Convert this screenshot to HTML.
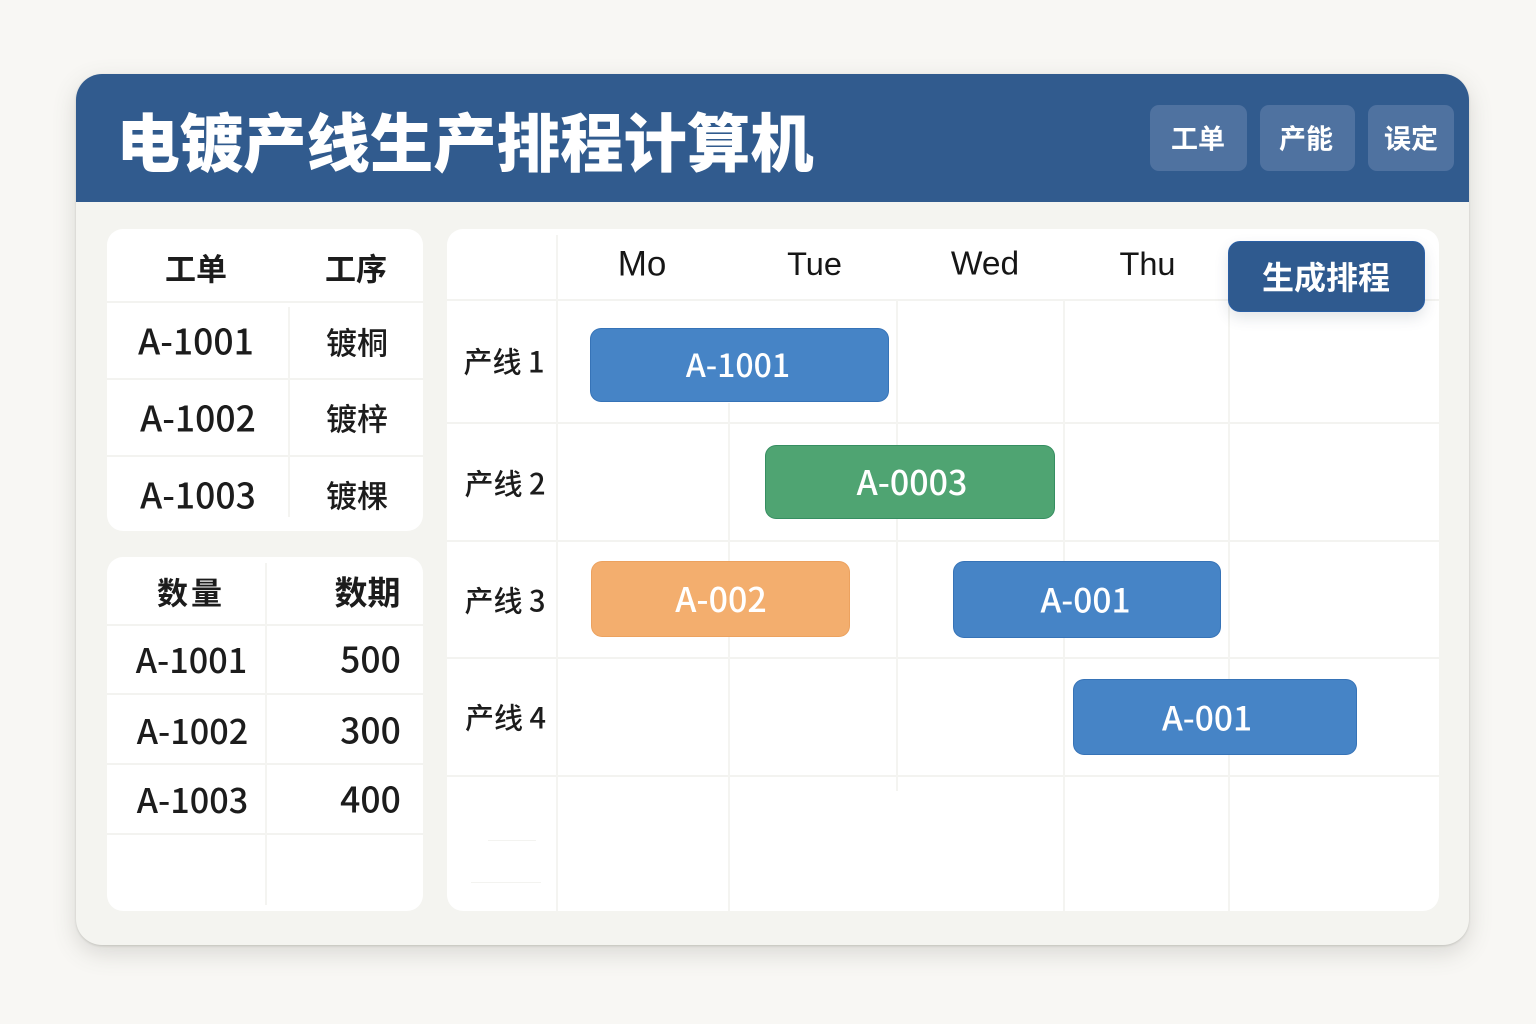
<!DOCTYPE html>
<html lang="zh">
<head>
<meta charset="utf-8">
<title>电镀产线生产排程计算机</title>
<style>
html,body{margin:0;padding:0;width:1536px;height:1024px;overflow:hidden;background:#f8f7f4}
body{position:relative;font-family:"Liberation Sans","Noto Sans CJK SC",sans-serif;color:#1c1c1c}
div{position:absolute;box-sizing:border-box}
.card{left:76px;top:74px;width:1393px;height:871px;border-radius:26px;background:#f4f4f0;box-shadow:0 8px 24px rgba(90,90,80,.2),0 1px 2px rgba(90,90,80,.22)}
.head{left:76px;top:74px;width:1393px;height:128px;border-radius:26px 26px 0 0;background:#315b8e}
.panel{background:#fff;border-radius:16px}
.h{height:2px;background:#f3f3f0}
.v{width:2px;background:#f4f4f1}
.t{white-space:nowrap;transform:translate(-50%,-50%);line-height:1;font-family:"Noto Sans CJK SC",sans-serif}
.nav{background:#4f72a0;border-radius:9px;top:105px;height:66px}
.nt{color:#fff;font-weight:700;font-size:27px}
.day{font-family:"Liberation Sans",sans-serif;font-size:32.5px;color:#161616}
.c{font-size:35.5px;font-weight:500}
.c2{font-size:34.2px;font-weight:500}
.n{font-size:35.5px;font-weight:500}
.th{font-size:31px;font-weight:700}
.p{font-size:31px;font-weight:500}
.line{font-size:29px;font-weight:500}
.bar{border-radius:11px;border:1px solid rgba(30,90,160,.4);background:#4684c6}
.bt{color:#fff;font-size:34px;font-weight:500}
</style>
</head>
<body>
<div class="card"></div>
<div class="head"></div>
<div class="t" style="left:465px;top:140px;font-size:63.4px;font-weight:900;color:#fff">电镀产线生产排程计算机</div>

<div class="nav" style="left:1150px;width:97px"></div>
<div class="nav" style="left:1260px;width:95px"></div>
<div class="nav" style="left:1368px;width:86px"></div>
<div class="t nt" style="left:1198px;top:137px">工单</div>
<div class="t nt" style="left:1306px;top:137px">产能</div>
<div class="t nt" style="left:1411px;top:137px">误定</div>

<!-- left table 1 -->
<div class="panel" style="left:107px;top:229px;width:316px;height:302px"></div>
<div class="h" style="left:107px;top:301px;width:316px"></div>
<div class="h" style="left:107px;top:378px;width:316px"></div>
<div class="h" style="left:107px;top:455px;width:316px"></div>
<div class="v" style="left:288px;top:307px;height:210px"></div>
<div class="t th" style="left:196px;top:267px">工单</div>
<div class="t th" style="left:356px;top:267px">工序</div>
<div class="t c" style="left:196px;top:340px">A-1001</div>
<div class="t c" style="left:198px;top:417px">A-1002</div>
<div class="t c" style="left:198px;top:494px">A-1003</div>
<div class="t p" style="left:357px;top:341px">镀桐</div>
<div class="t p" style="left:357px;top:417px">镀梓</div>
<div class="t p" style="left:357px;top:494px">镀棵</div>

<!-- left table 2 -->
<div class="panel" style="left:107px;top:557px;width:316px;height:354px"></div>
<div class="h" style="left:107px;top:624px;width:316px"></div>
<div class="h" style="left:107px;top:693px;width:316px"></div>
<div class="h" style="left:107px;top:763px;width:316px"></div>
<div class="h" style="left:107px;top:833px;width:316px"></div>
<div class="v" style="left:265px;top:563px;height:342px"></div>
<div class="t th" style="left:191px;top:591px;letter-spacing:3px">数量</div>
<div class="t th" style="left:367.5px;top:591px;font-size:33px">数期</div>
<div class="t c2" style="left:191.5px;top:658px">A-1001</div>
<div class="t c2" style="left:192.5px;top:729px">A-1002</div>
<div class="t c2" style="left:192.5px;top:798px">A-1003</div>
<div class="t n" style="left:370.5px;top:658px">500</div>
<div class="t n" style="left:370.5px;top:729px">300</div>
<div class="t n" style="left:370.5px;top:798px">400</div>

<!-- gantt panel -->
<div class="panel" style="left:447px;top:229px;width:992px;height:682px"></div>
<div class="h" style="left:447px;top:299px;width:992px"></div>
<div class="h" style="left:447px;top:422px;width:992px"></div>
<div class="h" style="left:447px;top:540px;width:992px"></div>
<div class="h" style="left:447px;top:657px;width:992px"></div>
<div class="h" style="left:447px;top:775px;width:992px"></div>
<div class="v" style="left:556px;top:235px;height:676px"></div>
<div class="v" style="left:728px;top:403px;height:508px"></div>
<div class="v" style="left:896px;top:300px;height:491px"></div>
<div class="v" style="left:1063px;top:300px;height:611px"></div>
<div class="v" style="left:1228px;top:300px;height:611px"></div>
<div class="h" style="left:488px;top:840px;width:48px;height:1px"></div>
<div class="h" style="left:471px;top:882px;width:70px;height:1px"></div>

<div class="t day" style="left:642px;top:264px;font-size:35px">Mo</div>
<div class="t day" style="left:814.5px;top:264px">Tue</div>
<div class="t day" style="left:985px;top:264px;font-size:33.5px">Wed</div>
<div class="t day" style="left:1147.5px;top:264px">Thu</div>

<div class="t line" style="left:504px;top:361px">产线 1</div>
<div class="t line" style="left:505px;top:483px">产线 2</div>
<div class="t line" style="left:505px;top:600px">产线 3</div>
<div class="t line" style="left:505.5px;top:717px">产线 4</div>

<div class="bar" style="left:590px;top:328px;width:299px;height:74px"></div>
<div class="bar" style="left:765px;top:445px;width:290px;height:74px;background:#4fa472;border-color:rgba(30,120,80,.5)"></div>
<div class="bar" style="left:591px;top:561px;width:259px;height:76px;background:#f3ae6e;border-color:rgba(230,150,80,.5)"></div>
<div class="bar" style="left:953px;top:561px;width:268px;height:77px"></div>
<div class="bar" style="left:1073px;top:679px;width:284px;height:76px"></div>
<div class="t bt" style="left:738px;top:364px;font-size:32px">A-1001</div>
<div class="t bt" style="left:912px;top:481px">A-0003</div>
<div class="t bt" style="left:721px;top:598px">A-002</div>
<div class="t bt" style="left:1085.5px;top:598px;font-size:33.5px">A-001</div>
<div class="t bt" style="left:1207px;top:716px;font-size:33.5px">A-001</div>

<div style="left:1228px;top:241px;width:197px;height:71px;border-radius:12px;background:#2f5a8f;border:1px solid #2a5fa5;box-shadow:0 6px 14px rgba(60,70,90,.14)"></div>
<div class="t" style="left:1326px;top:276px;color:#fff;font-size:32px;font-weight:700">生成排程</div>
</body>
</html>
